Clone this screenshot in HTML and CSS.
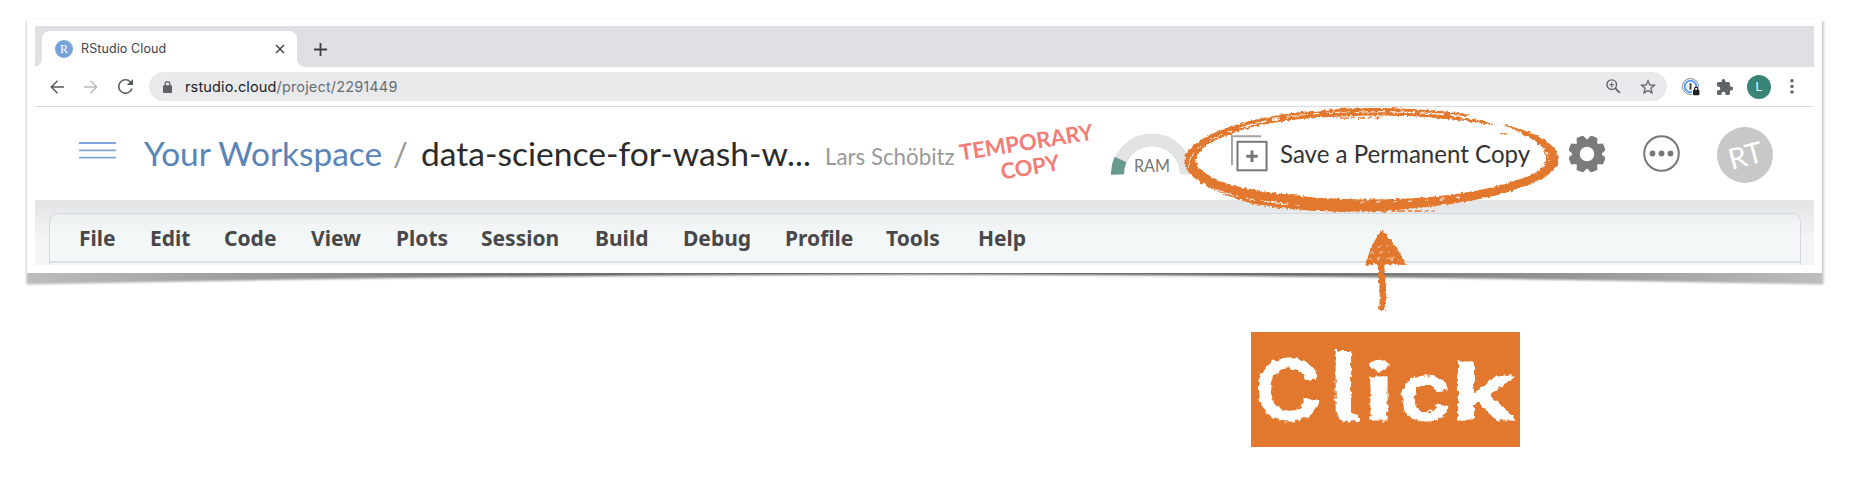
FILE: index.html
```html
<!DOCTYPE html>
<html lang="en">
<head>
<meta charset="utf-8">
<title>RStudio Cloud</title>
<link rel="stylesheet" href="styles.css">
</head>
<body>
<svg class="card-shadow" width="1870" height="300" viewBox="0 0 1870 300" aria-hidden="true">
  <defs>
    <linearGradient id="sh" x1="27" x2="1822" gradientUnits="userSpaceOnUse">
      <stop offset="0" stop-color="#bdbdbd"/><stop offset=".12" stop-color="#9c9c9c"/><stop offset=".3" stop-color="#6a6a6a"/>
      <stop offset=".5" stop-color="#5a5f5a"/><stop offset=".7" stop-color="#6a6a6a"/><stop offset=".88" stop-color="#9c9c9c"/><stop offset="1" stop-color="#bdbdbd"/>
    </linearGradient>
    <filter id="soft" x="-2%" y="-10%" width="104%" height="120%"><feGaussianBlur stdDeviation="1"/></filter>
  </defs>
  <path d="M26.500 21V284.500Q480 275 925 274.500Q1370 275 1823.500 284.500V21Z" fill="url(#sh)" filter="url(#soft)"/>
</svg>

<main class="card">
  <div class="shot">
    <div class="tabstrip">
      <div class="tab">
        <span class="favicon">R</span>
        <span class="tab-title">RStudio Cloud</span>
        <svg class="tab-close" width="10" height="10" viewBox="0 0 10 10"><path d="M1 1l8 8M9 1L1 9" stroke="#45484c" stroke-width="1.600" fill="none"/></svg>
      </div>
      <svg class="new-tab" width="13" height="13" viewBox="0 0 13 13"><path d="M6.500 0v13M0 6.500h13" stroke="#3c4043" stroke-width="1.800"/></svg>
    </div>

    <div class="toolbar">
      <svg class="nav" width="14" height="14" viewBox="0 0 14 14"><path d="M14 7H1.500M7.500 .8L1.300 7l6.200 6.200" fill="none" stroke="#55595e" stroke-width="1.500"/></svg>
      <svg class="nav" width="14" height="14" viewBox="0 0 14 14"><path d="M0 7h12.500M6.500 .8L12.700 7l-6.200 6.200" fill="none" stroke="#b8babd" stroke-width="1.500"/></svg>
      <svg class="nav reload" width="15" height="15" viewBox="4 4 16 16"><path fill="#55595e" d="M17.650 6.350A7.960 7.960 0 0 0 12 4a8 8 0 1 0 7.730 10h-1.800A6.300 6.300 0 1 1 12 5.700c1.740 0 3.280.72 4.400 1.890L13.500 10.500H20V4z"/></svg>
      <div class="omnibox">
        <svg class="lock" width="9" height="12" viewBox="0 0 9 12"><path d="M2.200 5V3a2.300 2.300 0 0 1 4.600 0v2" fill="none" stroke="#5f6368" stroke-width="1.300"/><rect y="4.300" width="9" height="7.700" rx="1" fill="#5f6368"/></svg>
        <span class="url"><b>rstudio.cloud</b>/project/2291449</span>
        <svg class="zoom" width="15" height="15" viewBox="0 0 15 15"><circle cx="5.700" cy="5.700" r="4.800" fill="none" stroke="#5f6368" stroke-width="1.400"/><path d="M9.300 9.300l4.500 4.500" stroke="#5f6368" stroke-width="1.800"/><path d="M5.700 3.200v5M3.200 5.700h5" stroke="#5f6368" stroke-width="1.100"/></svg>
        <svg class="star" width="16" height="16" viewBox="2 2 20 20"><path fill="#5f6368" d="M22 9.240l-7.190-.62L12 2 9.190 8.630 2 9.240l5.460 4.730L5.820 21 12 17.270 18.180 21l-1.630-7.030L22 9.240zM12 15.400l-3.760 2.270 1-4.280-3.320-2.880 4.380-.38L12 6.100l1.710 4.040 4.380.38-3.320 2.880 1 4.280L12 15.400z"/></svg>
      </div>
      <svg class="onepass" width="18" height="18" viewBox="0 0 18 18"><circle cx="8.500" cy="8.500" r="8" fill="none" stroke="#85888c" stroke-width="1"/><circle cx="8.500" cy="8.500" r="5.800" fill="#fff" stroke="#5a9ef5" stroke-width="2"/><path d="M8.500 5.300v6.400" stroke="#444" stroke-width="2"/><path d="M10.200 9.500h7.800V18h-7.800z" fill="#fff"/><rect x="11" y="11.800" width="6.400" height="5.400" rx=".8" fill="#222"/><path d="M12.600 12v-1.300a1.600 1.600 0 0 1 3.200 0V12" fill="none" stroke="#222" stroke-width="1.200"/></svg>
      <svg class="puzzle" width="16" height="16" viewBox="2 1 21 21"><path fill="#5f6368" d="M20.500 11H19V7a2 2 0 0 0-2-2h-4V3.500a2.500 2.500 0 0 0-5 0V5H4a2 2 0 0 0-2 2v3.800h1.500a2.700 2.700 0 0 1 0 5.400H2V20c0 1.100.9 2 2 2h3.800v-1.500a2.700 2.700 0 0 1 5.400 0V22H17a2 2 0 0 0 2-2v-4h1.500a2.500 2.500 0 0 0 0-5z"/></svg>
      <span class="profile">L</span>
      <svg class="kebab" width="4" height="15" viewBox="0 0 4 15"><g fill="#5f6368"><circle cx="2" cy="1.800" r="1.700"/><circle cx="2" cy="7.400" r="1.700"/><circle cx="2" cy="13" r="1.700"/></g></svg>
    </div>

    <header class="header">
      <svg class="burger" width="37" height="17" viewBox="0 0 37 17"><path d="M0 1h37M0 8.300h37M0 15.600h37" stroke="#7ea6d9" stroke-width="1.800"/></svg>
      <a class="workspace">Your Workspace</a>
      <span class="slash">/</span>
      <span class="project">data-science-for-wash-w...</span>
      <span class="owner">Lars Schöbitz</span>
      <span class="stamp">TEMPORARY<br>COPY</span>
      <svg class="gauge" width="82" height="42" viewBox="0 0 82 42">
        <path d="M6.500 41.500a34.500 34.500 0 0 1 69 0" fill="none" stroke="#e3e3e3" stroke-width="13"/>
        <path d="M6.500 41.500A34.500 34.500 0 0 1 9.500 26.500" fill="none" stroke="#6a9992" stroke-width="13"/>
        <text class="ram" x="23" y="38.500" textLength="36" lengthAdjust="spacingAndGlyphs">RAM</text>
      </svg>
      <svg class="copy" width="37" height="37" viewBox="0 0 37 37"><path d="M30 1.200H1V30" fill="none" stroke="#a5a5a5" stroke-width="2"/><rect x="6.500" y="6.800" width="29" height="28.500" fill="#fff" stroke="#777" stroke-width="2"/><path d="M21 15.500v11.400M15.300 21.200h11.400" stroke="#777" stroke-width="3"/></svg>
      <span class="save">Save a Permanent Copy</span>
      <svg class="gear" width="36" height="36" viewBox="-18 -18 36 36"><g fill="#7b7b7b"><path fill-rule="evenodd" d="M0-14.800a14.800 14.800 0 1 0 0 29.600a14.800 14.800 0 1 0 0-29.600zM0-7.300a7.300 7.300 0 1 1 0 14.600a7.300 7.300 0 1 1 0-14.600z"/>
        <g id="teeth"><path id="tooth" d="M-5.500-13L-3.600-18.500Q0-19 3.600-18.500L5.500-13z" transform="rotate(22.500)"/><use href="#tooth" transform="rotate(45)"/><use href="#tooth" transform="rotate(90)"/><use href="#tooth" transform="rotate(135)"/></g><use href="#teeth" transform="rotate(180)"/></g></svg>
      <svg class="more" width="37" height="37" viewBox="0 0 37 37"><circle cx="18.500" cy="18.500" r="17.300" fill="none" stroke="#777" stroke-width="2"/><g fill="#777"><circle cx="9.500" cy="18.500" r="2.900"/><circle cx="18.500" cy="18.500" r="2.900"/><circle cx="27.500" cy="18.500" r="2.900"/></g></svg>
      <span class="avatar"><i>RT</i></span>
    </header>

    <div class="ide">
      <nav class="menubar">
        <span>File</span><span>Edit</span><span>Code</span><span>View</span><span>Plots</span><span>Session</span><span>Build</span><span>Debug</span><span>Profile</span><span>Tools</span><span>Help</span>
      </nav>
    </div>
  </div>
</main>

<svg class="marks" width="420" height="230" viewBox="1170 90 420 230" aria-hidden="true">
  <defs>
    <filter id="rough" filterUnits="userSpaceOnUse" x="1170" y="90" width="420" height="230">
      <feTurbulence type="fractalNoise" baseFrequency=".3" numOctaves="2" seed="4"/>
      <feDisplacementMap in="SourceGraphic" scale="4" xChannelSelector="R" yChannelSelector="G"/>
    </filter>
  </defs>
  <g filter="url(#rough)">
    <path fill="#e2782e" d="M1471 115C1440 110 1410 108 1370 108C1300 109 1242 118 1208 136C1192 145 1184 152 1184.500 163C1186 178 1215 193 1250 203C1290 211 1330 212 1365 211.500C1420 210 1480 201 1512 191C1545 179 1559 171 1559 158C1556 142 1532 131 1503 124.500C1518 132 1536 139 1543 149C1548 157 1547 164 1538 171C1515 185 1465 194 1430 197C1395 200 1355 200 1320 198C1290 195 1250 191 1225 183C1205 175 1196 168 1196 159C1198 145 1225 135 1253 127C1290 118 1325 117 1370 115.500C1410 115 1450 118 1497 125.500C1485 121 1478 120 1460 117Z"/>
    <path fill="none" stroke="#e2782e" stroke-width="1.600" stroke-dasharray="8 3 4 2" d="M1524 133Q1542 140 1550 155M1340 118h40M1380 211h55M1501 134h6"/>
    <g fill="none" stroke="#fff" stroke-width="1">
      <path d="M1188 168C1189 145 1225 128 1280 119" stroke-dasharray="16 5 5 9"/>
      <path d="M1198 182C1222 195 1262 203 1300 205" stroke-dasharray="9 7 28 6"/>
      <path d="M1246 126C1285 114 1330 112 1368 111.500" stroke-dasharray="22 5 6 8"/>
      <path d="M1360 112C1400 111 1440 113 1476 118.500" stroke-width="1.200" stroke-dasharray="25 5"/>
      <path d="M1360 202C1400 202 1430 201 1460 197" stroke-dasharray="4 12"/>
      <path d="M1525 136C1540 143 1549 151 1549 162" stroke-dasharray="5 4"/>
    </g>
    <path fill="#e2782e" d="M1382 230C1373 241 1369 253 1365 265C1378 263 1392 265 1406 265C1400 251 1391 239 1382 230Z"/>
    <path d="M1381 262C1381 278 1385 293 1382 310" fill="none" stroke="#e2782e" stroke-width="6.500"/>
    <path d="M1371 253l20-2M1369 259l26-1M1378 247l10-1M1390 259l9 1" stroke="#f8e9de" stroke-width=".8" stroke-dasharray="4 4"/>
  </g>
</svg>

<div class="callout">
  <svg width="269" height="115" viewBox="0 0 269 115">
    <defs>
      <filter id="chalk" filterUnits="userSpaceOnUse" x="0" y="0" width="269" height="115">
        <feTurbulence type="fractalNoise" baseFrequency=".2" numOctaves="2" seed="9"/>
        <feDisplacementMap in="SourceGraphic" scale="6" xChannelSelector="R" yChannelSelector="G"/>
      </filter>
    </defs>
    <text class="click" y="88" filter="url(#chalk)"><tspan x="3" font-size="84" textLength="68" lengthAdjust="spacingAndGlyphs">C</tspan><tspan class="tail" x="72" font-size="86" textLength="42" lengthAdjust="spacingAndGlyphs">l</tspan><tspan x="112" font-size="78" textLength="32" lengthAdjust="spacingAndGlyphs">i</tspan><tspan x="147" font-size="80" textLength="54" lengthAdjust="spacingAndGlyphs">c</tspan><tspan x="200" font-size="80" textLength="65" lengthAdjust="spacingAndGlyphs">k</tspan></text>
  </svg>
</div>
</body>
</html>
```
FILE: styles.css
```css
* { box-sizing: border-box; }
body { margin: 0; padding-top: 18px; height: 484px; background: #fff; position: relative; overflow: hidden; font-family: Lato, "Liberation Sans", sans-serif; }
svg { display: block; flex: none; }
span, a { white-space: nowrap; flex: none; }

.card-shadow { position: absolute; left: 0; top: 0; z-index: -1; }
.card { width: 1795px; height: 255px; margin: 0 0 0 27px; padding: 7px 8px 8px; background: #fff; border-top: 1px solid #f6f6f6; }
.shot { height: 239px; overflow: hidden; display: flex; flex-direction: column; }

.tabstrip { height: 41px; background: #dee0e4; display: flex; padding: 5px 0 0 7px; flex: none; }
.tab { position: relative; width: 255px; height: 36px; background: #fff; border-radius: 8px 8px 0 0; display: flex; align-items: center; padding: 0 12px 0 13px; }
.tab::before, .tab::after { content: ""; position: absolute; bottom: 0; width: 8px; height: 8px; }
.tab::before { left: -8px; background: radial-gradient(circle at 0 0, transparent 7.5px, #fff 8px); }
.tab::after { right: -8px; background: radial-gradient(circle at 100% 0, transparent 7.5px, #fff 8px); }
.favicon { width: 18px; height: 18px; border-radius: 50%; background: #75a3d9; color: #fff; font: 12px/18px "Liberation Serif", serif; text-align: center; }
.tab-title { margin-left: 8px; font: 12.5px/18px Inter, sans-serif; letter-spacing: .1px; color: #414447; }
.tab-close { margin-left: auto; }
.new-tab { margin: 12px 0 0 17px; }

.toolbar { height: 40px; border-bottom: 1px solid #d9dade; display: flex; align-items: center; padding: 0 20px 0 15px; flex: none; }
.nav { margin-right: 20px; }
.reload { margin-right: 16px; }
.omnibox { width: 1518px; flex: none; height: 29px; border-radius: 15px; background: #e9eaec; display: flex; align-items: center; padding: 0 11px 0 14px; margin-right: 15px; }
.url { margin-left: 13px; font: 14.500px/20px Inter, sans-serif; letter-spacing: .15px; color: #6b6e72; }
.url b { font-weight: 400; color: #202124; }
.zoom { margin-left: auto; margin-right: 19px; }
.puzzle { margin-left: 17px; }
.profile { margin-left: 14px; width: 24px; height: 24px; border-radius: 50%; background: #388577; color: #fff; font: 12px/24px Inter, sans-serif; text-align: center; }
.kebab { margin-left: 19px; }

.header { height: 93px; display: flex; align-items: center; flex: none; padding-left: 44px; }
.burger { margin: -6px 28px 0 0; }
.workspace, .slash, .project { margin-top: -2px; line-height: 40px; }
.workspace { width: 249px; font-size: 33.400px; color: #5984b8; }
.slash { width: 28px; font-size: 33px; color: #999; }
.project { width: 404px; font-size: 33.600px; color: #2b2b2b; }
.owner { width: 135px; font-size: 22.300px; line-height: 28px; margin-top: 7px; color: #999; }
.stamp { width: 136px; font-size: 22px; line-height: 25px; font-weight: 700; color: #f27d76; text-align: center; transform: rotate(-9deg); }
.gauge { margin: 0 0 0 15px; }
.ram { font-size: 17px; fill: #777; }
.copy { margin: -1px 0 0 38px; }
.save { width: 288px; margin: -1px 0 0 12px; font-size: 24.100px; color: #333; }
.gear { margin-left: 1px; }
.avatar { width: 56px; height: 56px; border-radius: 50%; background: #c8c8c8; color: #fff; display: grid; place-items: center; margin-left: 37px; margin-top: 2px; }
.avatar i { font: 29px/32px Lato, sans-serif; transform: rotate(-15deg); }
.more { margin-left: 38px; }

.ide { flex: 1; padding: 13px 13px 0 14px; background: linear-gradient(#e3e4e6, #f3f5f7 40px); }
.menubar { height: 60px; border: 1px solid #d3d9dc; border-radius: 9px 9px 0 0; padding-left: 29px; background: linear-gradient(#ecf0f1, #f3f7f8 20px, #f3f7f8 47px, #d9e0e3 47px, #d9e0e3 49px, #f5f8f9 49px); display: grid; grid-template-columns: 71px 74px 87px 85px 85px 114px 88px 102px 101px 92px 60px; font: 700 21px/48px "Noto Sans", sans-serif; color: #484848; }

.marks { position: absolute; left: 1170px; top: 90px; }
.callout { width: 269px; height: 115px; margin: 59px 0 0 1251px; background: #e2782e; }
.click { font-family: Inter, sans-serif; font-weight: 600; fill: #fff; stroke: #fff; stroke-width: 1; }
.tail { font-family: "Noto Sans CJK SC", sans-serif; font-weight: 400; }
```
